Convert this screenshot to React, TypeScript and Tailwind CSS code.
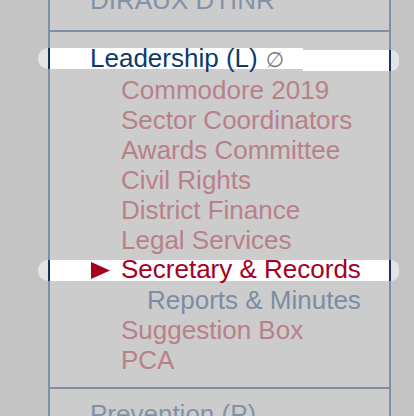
import React from 'react';

const pink = 'text-[#b9808a]';

function Item({ label, indent = 'pl-[71px]', color = pink }: { label: string; indent?: string; color?: string }) {
  return <div className={`h-[30px] leading-[30px] whitespace-nowrap ${indent} ${color}`}>{label}</div>;
}

export default function App() {
  return (
    <div className="h-[416px] overflow-hidden bg-[#c4c4c4] pl-[48px] font-['Liberation_Sans',Arial,sans-serif] text-[26px]">
      <div className="w-[343px] h-full border-x-2 border-[#7f8fa4] bg-[#cccccc]">
        {/* DIRAUX (cut off at top) */}
        <div className="h-[32px] overflow-hidden border-b-2 border-[#7f8fa4]">
          <div className="-mt-[15px] h-[30px] leading-[30px] pl-[40px] whitespace-nowrap text-[#8292a8]">DIRAUX DTINR</div>
        </div>

        {/* Leadership */}
        <div className="pt-[12px] pb-[12px] border-b-2 border-[#7f8fa4]">
          <div className="flex items-start h-[31px] pt-[4px] ml-[-12px] mr-[-10px]">
            <span className="w-[10px] h-[21px] rounded-l-full bg-[#e3e3e3]" />
            <span className="w-[2px] h-[21px] bg-[#0b3766]" />
            <div className="w-[253px] h-[21px] bg-white flex items-baseline pl-[40px] leading-[20px] whitespace-nowrap">
              <span className="text-[#0a3a6e]">Leadership (L)</span>
              <span className="ml-[8px] text-[21px] leading-[20px] text-[#7a7a7a] font-['DejaVu_Sans',sans-serif]">∅</span>
            </div>
            <div className="flex-1 h-[21px] mt-[2px] bg-white" />
            <span className="w-[2px] h-[21px] mt-[2px] bg-[#0b3766]" />
            <span className="w-[8px] h-[21px] mt-[2px] rounded-r-full bg-[#e3e3e3]" />
          </div>
          <Item label="Commodore 2019" />
          <Item label="Sector Coordinators" />
          <Item label="Awards Committee" />
          <Item label="Civil Rights" />
          <Item label="District Finance" />
          <Item label="Legal Services" />
          <div className="flex items-start h-[30px] pt-[5px] ml-[-12px] mr-[-10px]">
            <span className="w-[10px] h-[21px] rounded-l-full bg-[#e3e3e3]" />
            <span className="w-[2px] h-[21px] bg-[#0b3766]" />
            <div className="flex-1 h-[21px] bg-white flex items-center pl-[41px] leading-[19px] whitespace-nowrap text-[#a50021]">
              <svg width="19" height="17" viewBox="0 0 19 17" className="mr-[11px]">
                <path d="M0 0 L19 8.5 L0 17 Z" fill="#a50021" />
              </svg>
              <span className="self-start">Secretary &amp; Records</span>
            </div>
            <span className="w-[2px] h-[21px] bg-[#0b3766]" />
            <span className="w-[8px] h-[21px] rounded-r-full bg-[#e3e3e3]" />
          </div>
          <Item label="Reports & Minutes" indent="pl-[97px]" color="text-[#7c8da3]" />
          <Item label="Suggestion Box" />
          <Item label="PCA" />
        </div>

        {/* Prevention */}
        <div className="pt-[10px]">
          <div className="h-[30px] leading-[30px] pl-[40px] whitespace-nowrap text-[#8292a8]">Prevention (P)</div>
        </div>
      </div>
    </div>
  );
}
